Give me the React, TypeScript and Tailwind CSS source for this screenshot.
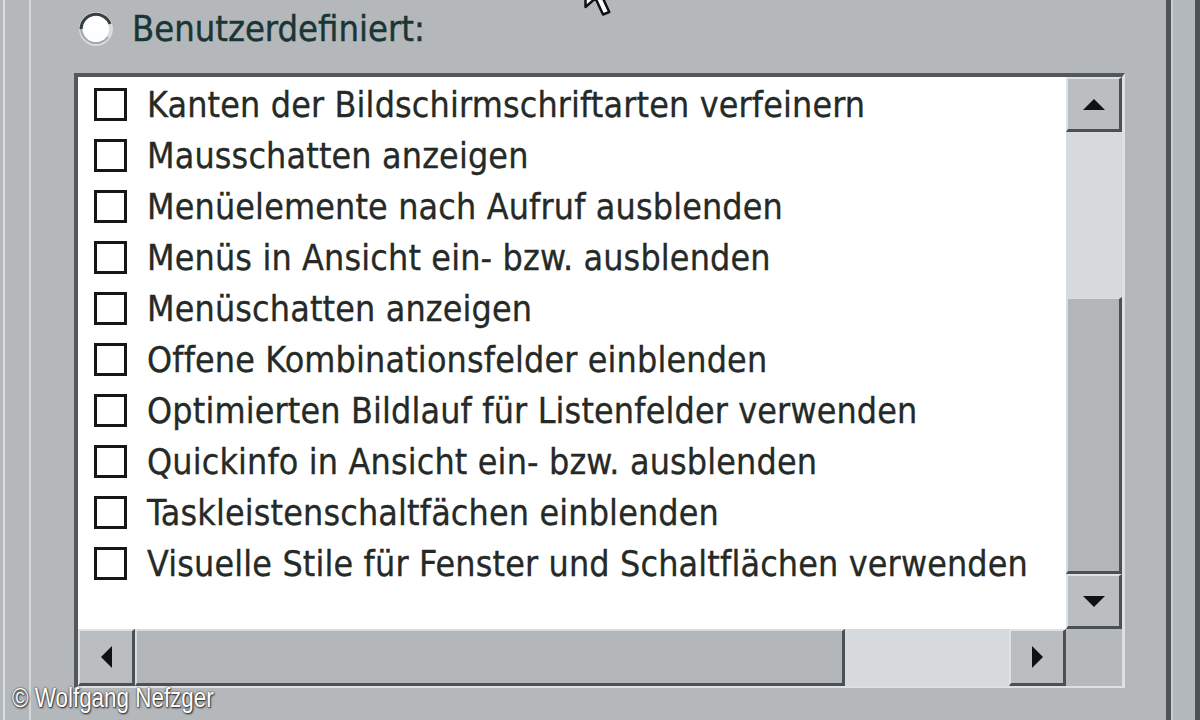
import React from 'react';

const items = [
  'Kanten der Bildschirmschriftarten verfeinern',
  'Mausschatten anzeigen',
  'Menüelemente nach Aufruf ausblenden',
  'Menüs in Ansicht ein- bzw. ausblenden',
  'Menüschatten anzeigen',
  'Offene Kombinationsfelder einblenden',
  'Optimierten Bildlauf für Listenfelder verwenden',
  'Quickinfo in Ansicht ein- bzw. ausblenden',
  'Taskleistenschaltfächen einblenden',
  'Visuelle Stile für Fenster und Schaltflächen verwenden',
];

type Dir = 'up' | 'down' | 'left' | 'right';

const Arrow: React.FC<{ dir: Dir }> = ({ dir }) => {
  const pts: Record<Dir, string> = {
    up: '0,11 11,0 22,11',
    down: '0,0 22,0 11,11',
    left: '11,0 11,22 0,11',
    right: '0,0 11,11 0,22',
  };
  const vertical = dir === 'up' || dir === 'down';
  return (
    <svg width={vertical ? 22 : 11} height={vertical ? 11 : 22} viewBox={vertical ? '0 0 22 11' : '0 0 11 22'}>
      <polygon points={pts[dir]} fill="#111" />
    </svg>
  );
};

const ScrollButton: React.FC<{ dir: Dir; className?: string }> = ({ dir, className = '' }) => (
  <div
    className={`shrink-0 flex items-center justify-center bg-[#babec1] border-t-2 border-l-2 border-t-[#dfe2e4] border-l-[#dfe2e4] border-b-[3px] border-r-[3px] border-b-[#4b5054] border-r-[#4b5054] ${className}`}
  >
    <Arrow dir={dir} />
  </div>
);

const Radio = () => (
  <svg width="36" height="36" viewBox="0 0 36 36">
    <circle cx="18" cy="18" r="17" fill="#d9dcde" />
    <path d="M3 18a15 15 0 0 1 29 -5" stroke="#3a3f42" strokeWidth="3" fill="none" />
    <path d="M3 18a15 15 0 0 0 27 8" stroke="#a4a8ab" strokeWidth="2" fill="none" />
    <circle cx="18" cy="18" r="13" fill="#fefefe" />
  </svg>
);

const App = () => {
  return (
    <div className="relative w-[1200px] h-[720px] overflow-hidden bg-[#b4b8bb] flex font-['DejaVu_Sans_Condensed','DejaVu_Sans',sans-serif]">
      {/* left edge lines */}
      <div className="w-[74px] shrink-0 flex">
        <div className="w-[3px]" />
        <div className="w-[2px] bg-[#d9dde0]" />
        <div className="w-[24px]" />
        <div className="w-[2px] bg-[#d3d7da]" />
      </div>

      <div className="w-[1051px] shrink-0 flex flex-col">
        <div className="h-[73px] flex items-start pt-[11px] pl-[4px] gap-[18px]">
          <Radio />
          <span className="text-[36px] leading-[36px] text-[#1a3536] [-webkit-text-stroke:0.4px_#1a3536]">
            Benutzerdefiniert:
          </span>
        </div>

        <div className="h-[615px] grid grid-cols-[1fr_56px] grid-rows-[1fr_57px] border-t-4 border-l-4 border-t-[#53585c] border-l-[#53585c] border-b-2 border-r-[3px] border-b-[#dde1e4] border-r-[#dde1e4]">
          <div className="bg-white pt-[2px] pl-[16px]">
            {items.map((t) => (
              <div key={t} className="h-[51px] flex items-center gap-[20px]">
                <div className="w-[33px] h-[33px] border-[3px] border-[#161616] bg-white shrink-0" />
                <span className="text-[35.5px] leading-none tracking-[0.15px] text-[#262a27] whitespace-nowrap [-webkit-text-stroke:0.3px_#262a27]">
                  {t}
                </span>
              </div>
            ))}
          </div>

          <div className="flex flex-col">
            <ScrollButton dir="up" className="h-[55px]" />
            <div className="h-[165px] bg-[#d6dadd]" />
            <div className="flex-1 bg-[#b3b6b9] border-t-2 border-l-2 border-t-[#d8dbdd] border-l-[#d8dbdd] border-b-[3px] border-r-[3px] border-b-[#4b5054] border-r-[#4b5054]" />
            <ScrollButton dir="down" className="h-[55px]" />
          </div>

          <div className="flex">
            <ScrollButton dir="left" className="w-[57px]" />
            <div className="w-[710px] bg-[#b3b6b9] border-t-2 border-l-2 border-t-[#d8dbdd] border-l-[#d8dbdd] border-b-[3px] border-r-[3px] border-b-[#4b5054] border-r-[#4b5054]" />
            <div className="flex-1 bg-[#d6dadd]" />
            <ScrollButton dir="right" className="w-[57px]" />
          </div>

          <div className="bg-[#b5b9bc]" />
        </div>
      </div>

      {/* right edge lines */}
      <div className="flex-1 flex">
        <div className="w-[41px]" />
        <div className="w-[5px] bg-[#4e5458]" />
        <div className="w-[2px] bg-[#c9cdd0]" />
        <div className="w-[22px]" />
        <div className="w-[5px] bg-[#4c5256]" />
      </div>

      {/* mouse pointer, cut off at the top */}
      <svg className="absolute left-[583px] top-[-36px]" width="50" height="56" viewBox="0 0 20 22">
        <path d="M1 1 L1 17 L5 13.5 L8 20 L10.5 19 L7.5 12.5 L12.5 12.5 Z" fill="#fff" stroke="#111" strokeWidth="1" strokeLinejoin="round" />
      </svg>

      {/* watermark */}
      <div className="absolute left-[12px] top-[683px] text-[27px] leading-[30px] text-white origin-left scale-x-[0.83] font-['Liberation_Sans',sans-serif] [text-shadow:0_0_2px_#222,1px_1px_2px_#222]">
        © Wolfgang Nefzger
      </div>
    </div>
  );
};

export default App;
